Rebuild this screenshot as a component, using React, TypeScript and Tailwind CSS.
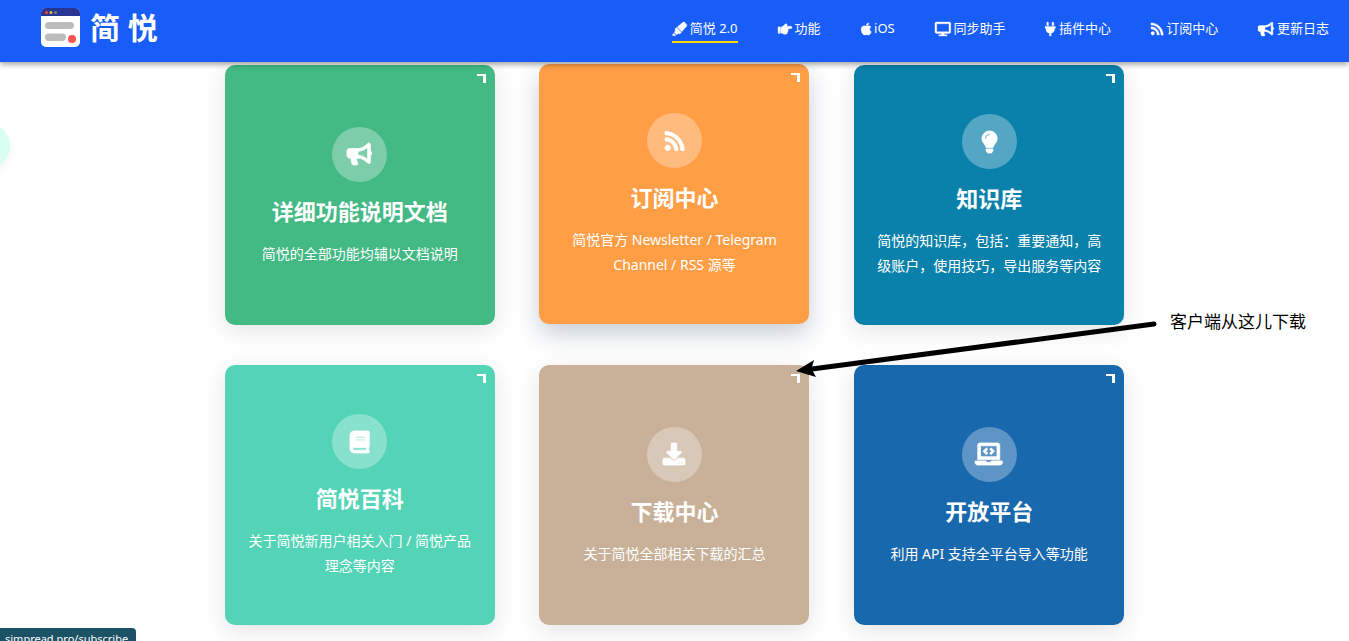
import type { IconType } from 'react-icons';
import {
  FaApple,
  FaBook,
  FaBullhorn,
  FaDesktop,
  FaDownload,
  FaHandPointRight,
  FaHighlighter,
  FaLaptopCode,
  FaLightbulb,
  FaPlug,
  FaRss,
} from 'react-icons/fa';

type NavItem = { label: string; icon: IconType; ratio: string; active?: boolean };

const navItems: NavItem[] = [
  { label: '简悦 2.0', icon: FaHighlighter, ratio: 'aspect-[17/16]', active: true },
  { label: '功能', icon: FaHandPointRight, ratio: 'aspect-square' },
  { label: 'iOS', icon: FaApple, ratio: 'aspect-[3/4]' },
  { label: '同步助手', icon: FaDesktop, ratio: 'aspect-[9/8]' },
  { label: '插件中心', icon: FaPlug, ratio: 'aspect-[3/4]' },
  { label: '订阅中心', icon: FaRss, ratio: 'aspect-[7/8]' },
  { label: '更新日志', icon: FaBullhorn, ratio: 'aspect-[9/8]' },
];

type CardItem = {
  title: string;
  text: string;
  icon: IconType;
  ratio: string;
  color: string;
  raised?: boolean;
};

const cards: CardItem[] = [
  {
    title: '详细功能说明文档',
    text: '简悦的全部功能均辅以文档说明',
    icon: FaBullhorn,
    ratio: 'aspect-[9/8]',
    color: 'bg-[#43b984]',
  },
  {
    title: '订阅中心',
    text: '简悦官方 Newsletter / Telegram Channel / RSS 源等',
    icon: FaRss,
    ratio: 'aspect-[7/8]',
    color: 'bg-[#ff9e45]',
    raised: true,
  },
  {
    title: '知识库',
    text: '简悦的知识库，包括：重要通知，高级账户，使用技巧，导出服务等内容',
    icon: FaLightbulb,
    ratio: 'aspect-[11/16]',
    color: 'bg-[#0a81ab]',
  },
  {
    title: '简悦百科',
    text: '关于简悦新用户相关入门 / 简悦产品理念等内容',
    icon: FaBook,
    ratio: 'aspect-[7/8]',
    color: 'bg-[#53d4b6]',
  },
  {
    title: '下载中心',
    text: '关于简悦全部相关下载的汇总',
    icon: FaDownload,
    ratio: 'aspect-square',
    color: 'bg-[#c8b198]',
  },
  {
    title: '开放平台',
    text: '利用 API 支持全平台导入等功能',
    icon: FaLaptopCode,
    ratio: 'aspect-[5/4]',
    color: 'bg-[#1868ae]',
  },
];

function Logo() {
  return (
    <svg viewBox="0 0 39 39" className="size-[39px]" aria-hidden="true">
      <rect width="39" height="39" rx="5" fill="#fff" />
      <path d="M5 0h29a5 5 0 0 1 5 5v3H0V5a5 5 0 0 1 5-5z" fill="#283593" />
      <circle cx="5.5" cy="4.5" r="1.5" fill="#f4511e" />
      <circle cx="10" cy="4.5" r="1.5" fill="#ffb330" />
      <circle cx="14.5" cy="4.5" r="1.5" fill="#4c9a6a" />
      <rect x="4" y="14" width="29" height="7" rx="3.5" fill="#bdbdbd" />
      <rect x="4" y="25.500" width="21" height="7.500" rx="3.700" fill="#bdbdbd" />
      <circle cx="31" cy="31" r="4" fill="#ff5252" />
    </svg>
  );
}

function Header() {
  return (
    <header className="relative z-10 flex h-[62px] items-start justify-between bg-[#195df9] pr-5 pl-[41px] text-white shadow-[0_2px_6px_rgba(0,0,0,0.4)]">
      <a href="#home" className="flex items-center gap-[10px] pt-2">
        <Logo />
        <span className="text-[30px] leading-[39px] font-bold">简 悦</span>
      </a>
      <nav className="flex gap-10 pt-4">
        {navItems.map(({ label, icon: Icon, ratio, active }) => (
          <a
            key={label}
            href="#nav"
            className={`flex items-center gap-[3px] border-b-2 text-[13px] leading-[25px] whitespace-nowrap ${
              active ? 'border-[#ffd800]' : 'border-transparent'
            }`}
          >
            <Icon className={`h-[14px] w-auto overflow-visible stroke-[12] ${ratio}`} />
            {label}
          </a>
        ))}
      </nav>
    </header>
  );
}

function Card({ title, text, icon: Icon, ratio, color, raised }: CardItem) {
  return (
    <a
      href="#card"
      className={`relative flex h-[260px] w-[270px] flex-col items-center justify-center rounded-[10px] px-[22px] pt-0.5 text-center text-white ${color} ${
        raised
          ? '-translate-y-px shadow-[0_10px_24px_rgba(30,60,90,0.25)]'
          : 'shadow-[0_6px_24px_rgba(0,0,0,0.11)]'
      }`}
    >
      <span className="absolute top-[9px] right-[9px] size-[9px] border-t-2 border-r-[3px] border-white" />
      <span className="flex size-[55px] items-center justify-center rounded-full bg-white/30">
        <Icon className={`h-[22px] w-auto overflow-visible stroke-[18] [stroke-linejoin:round] ${ratio}`} />
      </span>
      <h2 className="mt-[14px] text-[22px] leading-[30px] font-bold">{title}</h2>
      <p className="mt-[15px] text-[14px] leading-[25px]">{text}</p>
    </a>
  );
}

function Annotation() {
  return (
    <div className="pointer-events-none absolute top-[310px] left-[796px] z-20 flex items-start gap-3 text-black">
      <svg width="362" height="70" viewBox="0 0 362 70" aria-hidden="true">
        <path d="M358 14 16 59" stroke="#000" strokeWidth="5" strokeLinecap="round" />
        <path d="M0 61 18 50 15.500 59 20 67z" fill="#000" />
      </svg>
      <span className="text-[17px] leading-6 whitespace-nowrap">客户端从这儿下载</span>
    </div>
  );
}

export default function App() {
  return (
    <div
      lang="zh-CN"
      className="relative h-screen overflow-hidden bg-white font-['Noto_Sans','Noto_Sans_CJK_SC',sans-serif]"
    >
      <Header />
      <main className="mx-auto grid max-w-[944px] grid-cols-3 justify-items-center gap-y-10 pt-[3px]">
        {cards.map((card) => (
          <Card key={card.title} {...card} />
        ))}
      </main>
      <Annotation />
      <div className="absolute top-[123px] -left-9 size-[46px] rounded-full bg-[#d9fff0] shadow-[0_3px_8px_rgba(0,0,0,0.05)]" />
      <div className="absolute bottom-0 left-0 z-20 h-[13px] overflow-hidden rounded-tr-[4px] bg-[#1c5266] pr-2 pl-[5px] text-[11px] leading-[21px] text-white">
        simpread.pro/subscribe
      </div>
    </div>
  );
}
